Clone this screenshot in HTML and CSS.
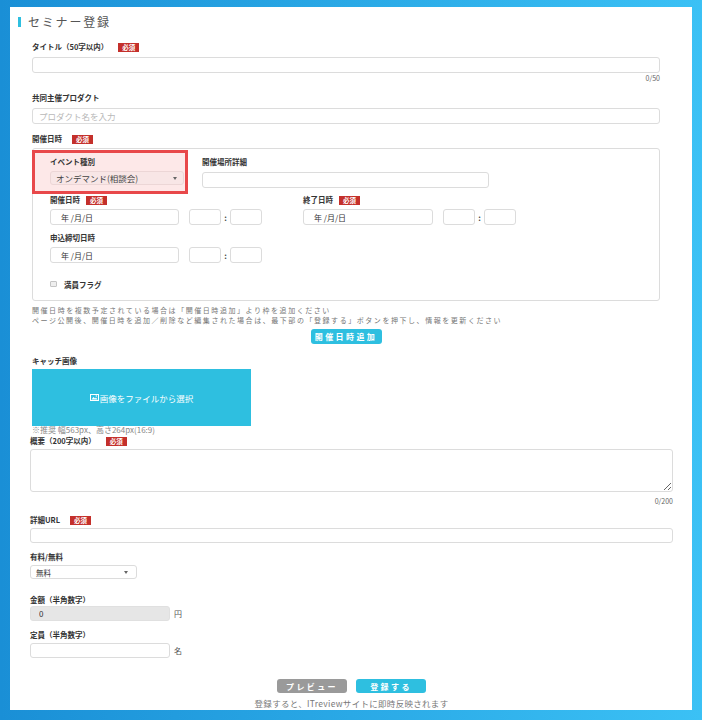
FILE: index.html
```html
<!DOCTYPE html>
<html lang="ja">

<head>
    <meta charset="UTF-8">
    <meta name="viewport" content="width=device-width, initial-scale=1.0">
    <title>セミナー登録</title>
    <link rel="stylesheet" href="styles.css">
</head>

<body>
    <div class="card">
        <h1 class="heading">セミナー登録</h1>

        <div class="form-top">
            <div class="field f-title">
                <div class="label-row"><span class="label">タイトル（50字以内）</span><span class="badge">必須</span></div>
                <input class="input" type="text">
                <div class="counter">0/50</div>
            </div>

            <div class="field f-product">
                <div class="label-row"><span class="label">共同主催プロダクト</span></div>
                <input class="input" type="text" placeholder="プロダクト名を入力">
            </div>

            <div class="field f-schedule">
                <div class="label-row"><span class="label">開催日時</span><span class="badge">必須</span></div>
                <div class="schedule">
                    <div class="sched-top">
                        <div class="highlight">
                            <div class="label-row"><span class="label">イベント種別</span></div>
                            <div class="select select-event">
                                <span>オンデマンド(相談会)</span>
                                <i class="caret"></i>
                            </div>
                        </div>
                        <div class="place">
                            <div class="label-row"><span class="label">開催場所詳細</span></div>
                            <input class="input input-place" type="text">
                        </div>
                    </div>

                    <div class="sched-dates">
                        <div class="date-group">
                            <div class="label-row"><span class="label">開催日時</span><span class="badge">必須</span></div>
                            <div class="date-line">
                                <input class="input input-date" type="text" value="年 /月/日">
                                <input class="input input-time" type="text">
                                <span class="colon">:</span>
                                <input class="input input-time" type="text">
                            </div>
                        </div>
                        <div class="date-group">
                            <div class="label-row"><span class="label">終了日時</span><span class="badge">必須</span></div>
                            <div class="date-line">
                                <input class="input input-date input-date-end" type="text" value="年 /月/日">
                                <input class="input input-time" type="text">
                                <span class="colon">:</span>
                                <input class="input input-time" type="text">
                            </div>
                        </div>
                    </div>

                    <div class="sched-deadline">
                        <div class="label-row"><span class="label">申込締切日時</span></div>
                        <div class="date-line">
                            <input class="input input-date" type="text" value="年 /月/日">
                            <input class="input input-time" type="text">
                            <span class="colon">:</span>
                            <input class="input input-time" type="text">
                        </div>
                    </div>

                    <div class="check-row">
                        <span class="checkbox"></span>
                        <span class="label">満員フラグ</span>
                    </div>
                </div>
            </div>

            <p class="notes">
                開催日時を複数予定されている場合は「開催日時追加」より枠を追加ください<br>
                ページ公開後、開催日時を追加／削除など編集された場合は、最下部の「登録する」ボタンを押下し、情報を更新ください
            </p>

            <div class="add-wrap">
                <button class="btn btn-cyan btn-add">開催日時追加</button>
            </div>

            <div class="field f-image">
                <div class="label-row"><span class="label">キャッチ画像</span></div>
                <div class="upload">
                    <svg width="9" height="7" viewBox="0 0 9 7">
                        <rect x="0.5" y="0.5" width="8" height="6" fill="none" stroke="#fff" stroke-width="1" />
                        <path d="M1.5 5.5 L3.5 3 L5 4.5 L6 3.5 L7.5 5.5 Z" fill="#fff" />
                        <circle cx="6.3" cy="2" r="0.7" fill="#fff" />
                    </svg>
                    <span>画像をファイルから選択</span>
                </div>
                <div class="hint">※推奨 幅563px、高さ264px(16:9)</div>
            </div>
        </div>

        <div class="form-bottom">
            <div class="field f-summary">
                <div class="label-row"><span class="label">概要（200字以内）</span><span class="badge">必須</span></div>
                <textarea class="textarea"></textarea>
                <div class="counter">0/200</div>
            </div>

            <div class="field f-url">
                <div class="label-row"><span class="label">詳細URL</span><span class="badge">必須</span></div>
                <input class="input input-url" type="text">
            </div>

            <div class="field f-fee">
                <div class="label-row"><span class="label">有料/無料</span></div>
                <div class="select select-fee">
                    <span>無料</span>
                    <i class="caret"></i>
                </div>
            </div>

            <div class="field f-price">
                <div class="label-row"><span class="label">金額（半角数字）</span></div>
                <div class="unit-line">
                    <input class="input input-small input-disabled" type="text" value="0" disabled>
                    <span class="unit">円</span>
                </div>
            </div>

            <div class="field f-capacity">
                <div class="label-row"><span class="label">定員（半角数字）</span></div>
                <div class="unit-line">
                    <input class="input input-small" type="text">
                    <span class="unit">名</span>
                </div>
            </div>

            <div class="actions">
                <button class="btn btn-gray">プレビュー</button>
                <button class="btn btn-cyan">登録する</button>
            </div>
            <p class="final-note">登録すると、ITreviewサイトに即時反映されます</p>
        </div>
    </div>
</body>

</html>
```

FILE: styles.css
```css
* {
    margin: 0;
    padding: 0;
    box-sizing: border-box;
}

body {
    height: 720px;
    overflow: hidden;
    background: linear-gradient(90deg, #1a8fd6 0%, #2aa9e6 50%, #3bc1f5 100%);
    font-family: "Noto Sans CJK JP", "Noto Sans", sans-serif;
    color: #333;
}

.card {
    margin: 7px 10px 0 10px;
    height: 703px;
    background-color: #fff;
    overflow: hidden;
}

.heading {
    display: flex;
    align-items: center;
    margin: 10px 0 0 8px;
    height: 10px;
    font-size: 12px;
    font-weight: normal;
    line-height: 10px;
    letter-spacing: 1.8px;
    color: #555;
}

.heading::before {
    content: "";
    display: block;
    width: 3px;
    height: 10px;
    margin-right: 7px;
    background-color: #2ebfe0;
}

.form-top {
    padding: 0 32px 0 22px;
}

.form-bottom {
    padding: 0 19px 0 20px;
}

.label-row {
    display: flex;
    align-items: center;
    gap: 10px;
    height: 10px;
    margin-bottom: 5px;
}

.label {
    font-size: 7.5px;
    font-weight: bold;
    line-height: 10px;
    color: #333;
}

.badge {
    display: inline-block;
    width: 21px;
    height: 9px;
    background-color: #c4302b;
    color: #fff;
    font-size: 6.5px;
    font-weight: bold;
    line-height: 9px;
    text-align: center;
}

.input {
    display: block;
    width: 100%;
    height: 16px;
    border: 1px solid #dcdcdc;
    border-radius: 3px;
    background-color: #fff;
    padding: 0 6px;
    font-family: inherit;
    font-size: 8px;
    color: #333;
    outline: none;
}

.input::placeholder {
    color: #b8b8b8;
    font-size: 8.5px;
}

.counter {
    margin-top: 1px;
    text-align: right;
    font-size: 7px;
    line-height: 8px;
    color: #666;
}

.f-title {
    margin-top: 15px;
}

.f-product {
    margin-top: 11px;
}

.f-schedule {
    margin-top: 10px;
}

.f-schedule > .label-row {
    margin-bottom: 4px;
}

.schedule {
    border: 1px solid #dcdcdc;
    border-radius: 3px;
    padding-bottom: 10px;
}

.sched-top {
    display: flex;
    align-items: flex-start;
}

.highlight {
    width: 156px;
    margin: 1px 0 0 -1px;
    padding: 4px 1px 6px 15px;
    border: 3px solid #e8484a;
    background-color: #fde8e8;
}

.highlight .label-row {
    margin-bottom: 4px;
}

.select {
    display: flex;
    align-items: center;
    justify-content: space-between;
    border: 1px solid #dcdcdc;
    border-radius: 3px;
    background-color: #fff;
    padding: 0 6px 0 5px;
    color: #333;
}

.select-event {
    width: 134px;
    height: 14px;
    background-color: #f8e6e6;
    border-color: #ecd6d6;
    font-size: 8.5px;
    color: #444;
}

.caret {
    display: block;
    width: 0;
    height: 0;
    border-left: 2.5px solid transparent;
    border-right: 2.5px solid transparent;
    border-top: 3px solid #666;
}

.place {
    margin: 8px 0 0 14px;
}

.input-place {
    width: 287px;
}

.sched-dates {
    display: flex;
    gap: 41px;
    margin-top: 1px;
    padding-left: 17px;
}

.sched-dates .label-row {
    gap: 6px;
}

.sched-dates .label-row,
.sched-deadline .label-row {
    margin-bottom: 4px;
}

.date-line {
    display: flex;
    align-items: center;
}

.input-date {
    width: 129px;
    padding-left: 10px;
}

.input-date-end {
    width: 130px;
}

.input-date + .input-time {
    margin-left: 10px;
}

.input-time {
    width: 32px;
}

.colon {
    width: 9px;
    text-align: center;
    font-size: 8px;
    font-weight: bold;
    color: #444;
}

.sched-deadline {
    margin-top: 8px;
    padding-left: 17px;
}

.check-row {
    display: flex;
    align-items: center;
    height: 10px;
    margin-top: 17px;
    padding-left: 17px;
}

.checkbox {
    display: inline-block;
    width: 7px;
    height: 6px;
    margin: -3px 7px 0 0;
    border: 1px solid #c4c4c4;
    border-radius: 1px;
    background-color: #eee;
}

.notes {
    margin-top: 4px;
    font-size: 7px;
    line-height: 10px;
    letter-spacing: 1.55px;
    color: #777;
}

.add-wrap {
    display: flex;
    justify-content: center;
    margin-top: 4px;
}

.btn {
    height: 15px;
    border: none;
    border-radius: 3px;
    font-family: inherit;
    font-size: 8px;
    font-weight: bold;
    letter-spacing: 2.4px;
    color: #fff;
    cursor: pointer;
}

.btn-cyan {
    background-color: #2ebfe0;
}

.btn-gray {
    background-color: #9a9a9a;
}

.btn-add {
    width: 71px;
}

.f-image {
    margin-top: 12px;
}

.f-image .label-row {
    margin-bottom: 3px;
}

.upload {
    display: flex;
    align-items: center;
    justify-content: center;
    gap: 1px;
    width: 219px;
    height: 57px;
    background-color: #2ebfe0;
    color: #fff;
    font-size: 8.5px;
}

.hint {
    font-size: 8px;
    line-height: 8px;
    color: #888;
}

.f-summary {
    margin-top: 2px;
}

.f-summary .label-row {
    margin-bottom: 3px;
}

.textarea {
    display: block;
    width: 100%;
    height: 43px;
    border: 1px solid #dcdcdc;
    border-radius: 3px;
    resize: vertical;
    outline: none;
}

.f-summary .counter {
    margin-top: 5px;
}

.f-url {
    margin-top: 10px;
}

.f-url .label-row {
    margin-bottom: 3px;
}

.input-url {
    height: 15px;
}

.f-fee {
    margin-top: 9px;
}

.f-fee .label-row {
    margin-bottom: 3px;
}

.select-fee {
    width: 107px;
    height: 14px;
    font-size: 7.5px;
    padding-right: 8px;
}

.f-price {
    margin-top: 16px;
}

.f-price .label-row {
    margin-bottom: 1px;
}

.f-capacity {
    margin-top: 9px;
}

.f-capacity .label-row {
    margin-bottom: 3px;
}

.unit-line {
    display: flex;
    align-items: center;
}

.input-small {
    width: 140px;
    height: 15px;
    padding-left: 8px;
}

.input-disabled {
    background-color: #e6e6e6;
    border-color: #e0e0e0;
}

.unit {
    margin-left: 4px;
    font-size: 8px;
    color: #555;
}

.actions {
    display: flex;
    justify-content: center;
    gap: 9px;
    margin-top: 21px;
}

.actions .btn {
    width: 70px;
    height: 14px;
}

.final-note {
    margin-top: 6px;
    text-align: center;
    font-size: 8.5px;
    line-height: 8px;
    letter-spacing: 0.3px;
    color: #777;
}
```
